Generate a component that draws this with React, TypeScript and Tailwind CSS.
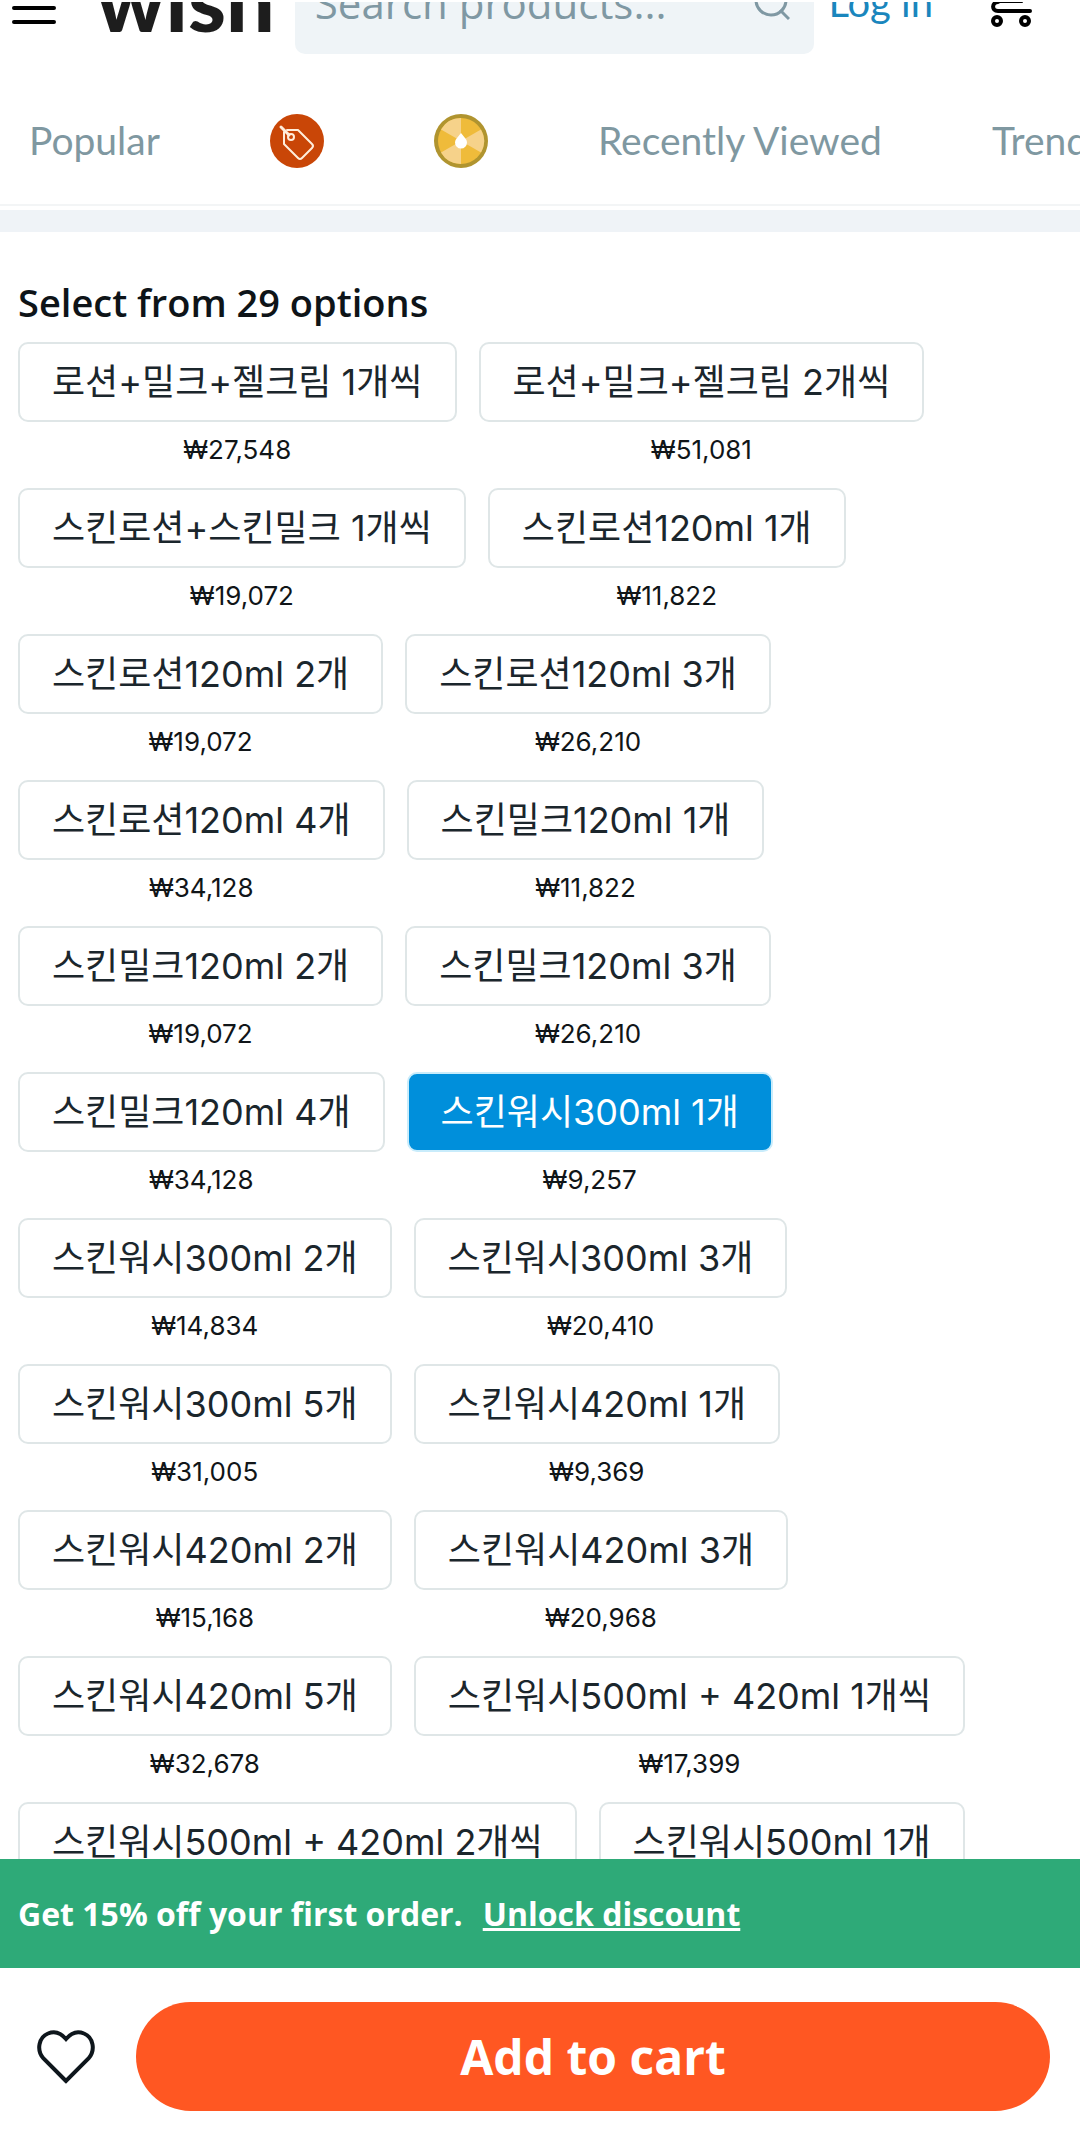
import React, { useState } from "react";

interface Option {
  label: string;
  price: string;
}

const OPTIONS: Option[] = [
  { label: "로션+밀크+젤크림 1개씩", price: "₩27,548" },
  { label: "로션+밀크+젤크림 2개씩", price: "₩51,081" },
  { label: "스킨로션+스킨밀크 1개씩", price: "₩19,072" },
  { label: "스킨로션120ml 1개", price: "₩11,822" },
  { label: "스킨로션120ml 2개", price: "₩19,072" },
  { label: "스킨로션120ml 3개", price: "₩26,210" },
  { label: "스킨로션120ml 4개", price: "₩34,128" },
  { label: "스킨밀크120ml 1개", price: "₩11,822" },
  { label: "스킨밀크120ml 2개", price: "₩19,072" },
  { label: "스킨밀크120ml 3개", price: "₩26,210" },
  { label: "스킨밀크120ml 4개", price: "₩34,128" },
  { label: "스킨워시300ml 1개", price: "₩9,257" },
  { label: "스킨워시300ml 2개", price: "₩14,834" },
  { label: "스킨워시300ml 3개", price: "₩20,410" },
  { label: "스킨워시300ml 5개", price: "₩31,005" },
  { label: "스킨워시420ml 1개", price: "₩9,369" },
  { label: "스킨워시420ml 2개", price: "₩15,168" },
  { label: "스킨워시420ml 3개", price: "₩20,968" },
  { label: "스킨워시420ml 5개", price: "₩32,678" },
  { label: "스킨워시500ml + 420ml 1개씩", price: "₩17,399" },
  { label: "스킨워시500ml + 420ml 2개씩", price: "" },
  { label: "스킨워시500ml 1개", price: "" },
];

function MenuIcon() {
  return (
    <svg width="44" height="32" viewBox="0 0 44 32" fill="none" stroke="#000" strokeWidth="4" strokeLinecap="round">
      <path d="M2 2h40M2 16h40M2 30h40" />
    </svg>
  );
}

function SearchIcon() {
  return (
    <svg width="36" height="38" viewBox="0 0 36 38" fill="none" stroke="#7f98a3" strokeWidth="3">
      <circle cx="17" cy="17" r="15" />
      <path d="M26 27l9 9" />
    </svg>
  );
}

function CartIcon() {
  return (
    <svg width="42" height="46" viewBox="0 0 42 46" fill="none" stroke="#000" strokeLinecap="round">
      <path d="M7 20c-6 0-7 9 0 9h32" strokeWidth="4" />
      <path d="M7 20h24" strokeWidth="2" />
      <circle cx="6" cy="39" r="4" strokeWidth="4" />
      <circle cx="34" cy="39" r="4" strokeWidth="4" />
    </svg>
  );
}

function TagIcon() {
  return (
    <svg width="54" height="54" viewBox="0 0 54 54" fill="none">
      <circle cx="27" cy="27" r="27" fill="#c94607" />
      <g stroke="#ffeedb" strokeWidth="2" strokeLinecap="round" strokeLinejoin="round">
        <path d="M11 13l8 8" strokeWidth="3" />
        <path d="M14 18v12l14 14q2 2 4 0l10-10q2-2 0-4L28 16H17" />
        <circle cx="21" cy="23" r="3" />
      </g>
    </svg>
  );
}

function WheelIcon() {
  return (
    <svg width="54" height="54" viewBox="0 0 54 54">
      <circle cx="27" cy="27" r="27" fill="#b0942f" />
      <circle cx="27" cy="27" r="23" fill="#efbb3a" />
      <g fill="#f6d28a">
        <path d="M27 27V4A23 23 0 0 0 7 15.500z" />
        <path d="M27 27L47 15.500A23 23 0 0 1 47 38.500z" />
        <path d="M27 27V50A23 23 0 0 1 7 38.500z" />
      </g>
      <path d="M27 19l4 5a6 6 0 1 1-8 0z" fill="#fff" />
    </svg>
  );
}

function HeartIcon() {
  return (
    <svg width="58" height="54" viewBox="0 0 58 54" fill="none" stroke="#0e161c" strokeWidth="4">
      <path d="M29 51L6.500 28.500C-1 20 2 7 11 3.500 18 .500 24 3 29 9 34 3 40 .500 47 3.500 56 7 59 20 51.500 28.500z" />
    </svg>
  );
}

function OptionButton({
  option,
  selected,
  onSelect,
}: {
  option: Option;
  selected: boolean;
  onSelect: () => void;
}) {
  return (
    <div className="flex h-[146px] flex-col items-center font-['Inter','Noto_Sans_CJK_KR',sans-serif]">
      <button
        type="button"
        aria-pressed={selected}
        onClick={onSelect}
        className={`h-20 rounded-[10px] border-2 px-8 text-[36px] leading-[72px] whitespace-nowrap ${
          selected
            ? "border-[#c9ecfb] bg-[#008fdb] text-white"
            : "border-[#dfe6e7] bg-white text-[#1b262c]"
        }`}
      >
        {option.label}
      </button>
      <span className="mt-3 text-[26px] leading-8 text-[#101518]">{option.price}</span>
    </div>
  );
}

export default function App() {
  const [selected, setSelected] = useState(11);

  return (
    <div className="min-h-screen bg-white font-['Lato','Noto_Sans_CJK_KR',sans-serif]">
      <header className="flex h-[54px] items-end overflow-hidden border-t-2 border-white pr-[47px] pl-3">
        <button type="button" aria-label="Menu" className="mb-[30px] shrink-0">
          <MenuIcon />
        </button>
        <a href="#" className="ml-10 shrink-0 text-[86px] leading-[110px] font-black text-[#1d1d1d]">
          wish
        </a>
        <label className="ml-5 flex h-[104px] min-w-0 flex-1 items-center rounded-[10px] bg-[#eff4f7] pr-6 pl-5">
          <input
            type="text"
            aria-label="Search products"
            placeholder="Search products..."
            className="min-w-0 flex-1 bg-transparent font-['Open_Sans',sans-serif] text-[42px] placeholder:text-[#7f98a3] focus:outline-none"
          />
          <SearchIcon />
        </label>
        <a href="#" className="ml-[14px] shrink-0 text-[40px] leading-[104px] text-[#1a86bd]">
          Log in
        </a>
        <button type="button" aria-label="Cart" className="mb-[26px] ml-[58px] shrink-0">
          <CartIcon />
        </button>
      </header>

      <nav className="mt-[23px] flex h-[129px] items-center overflow-hidden border-b-2 border-[#f3f5f6] pl-[29px] text-[39px] whitespace-nowrap text-[#7f98a1]">
        <a href="#">Popular</a>
        <a href="#" aria-label="Deals" className="ml-[110px] shrink-0">
          <TagIcon />
        </a>
        <a href="#" aria-label="Blitz Buy" className="ml-[110px] shrink-0">
          <WheelIcon />
        </a>
        <a href="#" className="ml-[110px]">Recently Viewed</a>
        <a href="#" className="ml-[110px]">Trending Now</a>
      </nav>
      <div className="mt-1 h-[22px] bg-[#eff3f7]" />

      <main className="pt-[46px] pl-[18px]">
        <h2 className="font-['Open_Sans',sans-serif] text-[38px] leading-[48px] font-semibold text-[#0e1418]">
          Select from 29 options
        </h2>
        <div className="mt-4 flex flex-wrap gap-x-[22px]">
          {OPTIONS.map((option, i) => (
            <OptionButton
              key={option.label}
              option={option}
              selected={selected === i}
              onSelect={() => setSelected(i)}
            />
          ))}
        </div>
      </main>

      <footer className="fixed inset-x-0 bottom-0 bg-white font-['Open_Sans',sans-serif]">
        <div className="flex h-[109px] items-center gap-5 bg-[#2eaa78] pl-[18px] text-[32px] font-bold text-white">
          <span>Get 15% off your first order.</span>
          <a href="#" className="underline">
            Unlock discount
          </a>
        </div>
        <div className="flex items-center pt-[34px] pr-[30px] pb-[31px] pl-[37px]">
          <button type="button" aria-label="Add to wishlist" className="shrink-0">
            <HeartIcon />
          </button>
          <button
            type="button"
            className="ml-[41px] h-[109px] flex-1 rounded-full bg-[#ff5722] text-[48px] font-bold text-white"
          >
            Add to cart
          </button>
        </div>
      </footer>
    </div>
  );
}
